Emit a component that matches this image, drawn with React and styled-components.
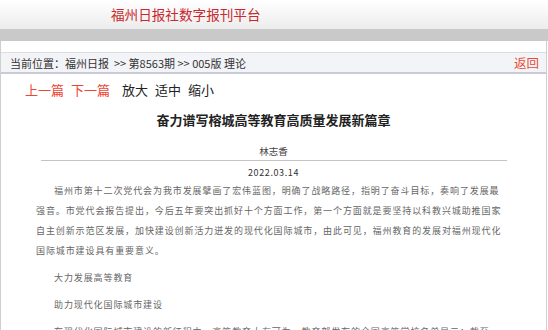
import React from 'react';
import styled, { createGlobalStyle } from 'styled-components';

const GlobalStyle = createGlobalStyle`
  body {
    margin: 0;
    background: #fff;
    font-family: "Noto Sans CJK SC", "Liberation Sans", sans-serif;
  }
`;

const Page = styled.div`
  width: 548px;
  height: 330px;
  overflow: hidden;
`;

const Header = styled.div`
  height: 29px;
  padding-left: 111px;
  display: flex;
  align-items: center;
  background: linear-gradient(#ffffff, #ececec);
`;

const SiteTitle = styled.div`
  font-size: 13.6px;
  color: #c9282d;
  line-height: 1;
`;

const GrayBar = styled.div`
  height: 12px;
  background: #c9c9c9;
`;

const Frame = styled.div`
  width: 547px;
  box-sizing: border-box;
  border-left: 1px solid #cfcfcf;
  border-right: 1px solid #cfcfcf;
  padding-top: 11px;
`;

const Crumbs = styled.div`
  height: 19px;
  border-top: 1px solid #dcdde3;
  border-bottom: 2px solid #c9ccd6;
  background: #f3f4f8;
  display: flex;
  align-items: center;
  justify-content: space-between;
  padding: 0 7px 0 9px;
`;

const CrumbText = styled.span`
  font-size: 11px;
  color: #333;
  white-space: pre;
`;

const BackLink = styled.a`
  font-size: 12.5px;
  color: #e84b36;
  text-decoration: none;
`;

const Toolbar = styled.div`
  display: flex;
  align-items: center;
  height: 28px;
  padding: 1px 0 0 24px;
`;

const ToolLink = styled.a`
  font-size: 13px;
  color: ${p => (p.$red ? '#ee4433' : '#222')};
  margin-right: ${p => p.$gap || 7}px;
  text-decoration: none;
`;

const Article = styled.div`
  padding: 0 0 0 35px;
`;

const Title = styled.h1`
  margin: 7px 0 0 -35px;
  text-align: center;
  font-size: 13px;
  font-weight: bold;
  color: #222;
  line-height: 20px;
`;

const Author = styled.div`
  margin: 14px 0 0 -35px;
  text-align: center;
  font-size: 9.5px;
  color: #444;
  line-height: 14px;
`;

const Rule = styled.hr`
  margin: 2px 0 0 5px;
  width: 466px;
  border: none;
  border-top: 1px solid #c4c4c4;
`;

const DateLine = styled.div`
  margin: 5px 0 0 -35px;
  text-align: center;
  font-size: 9px;
  letter-spacing: 0.6px;
  color: #333;
  line-height: 14px;
`;

const Para = styled.p`
  margin: ${p => (p.$first ? 1 : 7)}px 0 0;
  width: 468px;
  font-size: 9px;
  letter-spacing: 0.9px;
  line-height: 20px;
  color: #666;
  text-indent: 2em;
  font-family: "Liberation Serif", "Noto Sans CJK SC", serif;
`;

export default function App() {
  return (
    <Page>
      <GlobalStyle />
      <Header>
        <SiteTitle>福州日报社数字报刊平台</SiteTitle>
      </Header>
      <GrayBar />
      <Frame>
        <Crumbs>
          <CrumbText>当前位置：福州日报  &gt;&gt; 第8563期 &gt;&gt; 005版 理论</CrumbText>
          <BackLink href="#">返回</BackLink>
        </Crumbs>
        <Toolbar>
          <ToolLink $red>上一篇</ToolLink>
          <ToolLink $red $gap={12}>下一篇</ToolLink>
          <ToolLink>放大</ToolLink>
          <ToolLink>适中</ToolLink>
          <ToolLink>缩小</ToolLink>
        </Toolbar>
        <Article>
          <Title>奋力谱写榕城高等教育高质量发展新篇章</Title>
          <Author>林志香</Author>
          <Rule />
          <DateLine>2022.03.14</DateLine>
          <Para $first>
            福州市第十二次党代会为我市发展擘画了宏伟蓝图，明确了战略路径，指明了奋斗目标，奏响了发展最强音。市党代会报告提出，今后五年要突出抓好十个方面工作，第一个方面就是要坚持以科教兴城助推国家自主创新示范区发展，加快建设创新活力迸发的现代化国际城市，由此可见，福州教育的发展对福州现代化国际城市建设具有重要意义。
          </Para>
          <Para>大力发展高等教育</Para>
          <Para>助力现代化国际城市建设</Para>
          <Para>
            在现代化国际城市建设的新征程中，高等教育大有可为。教育部发布的全国高等学校名单显示：截至2021年9月30日，福州市共有高等学校37所。
          </Para>
        </Article>
      </Frame>
    </Page>
  );
}
